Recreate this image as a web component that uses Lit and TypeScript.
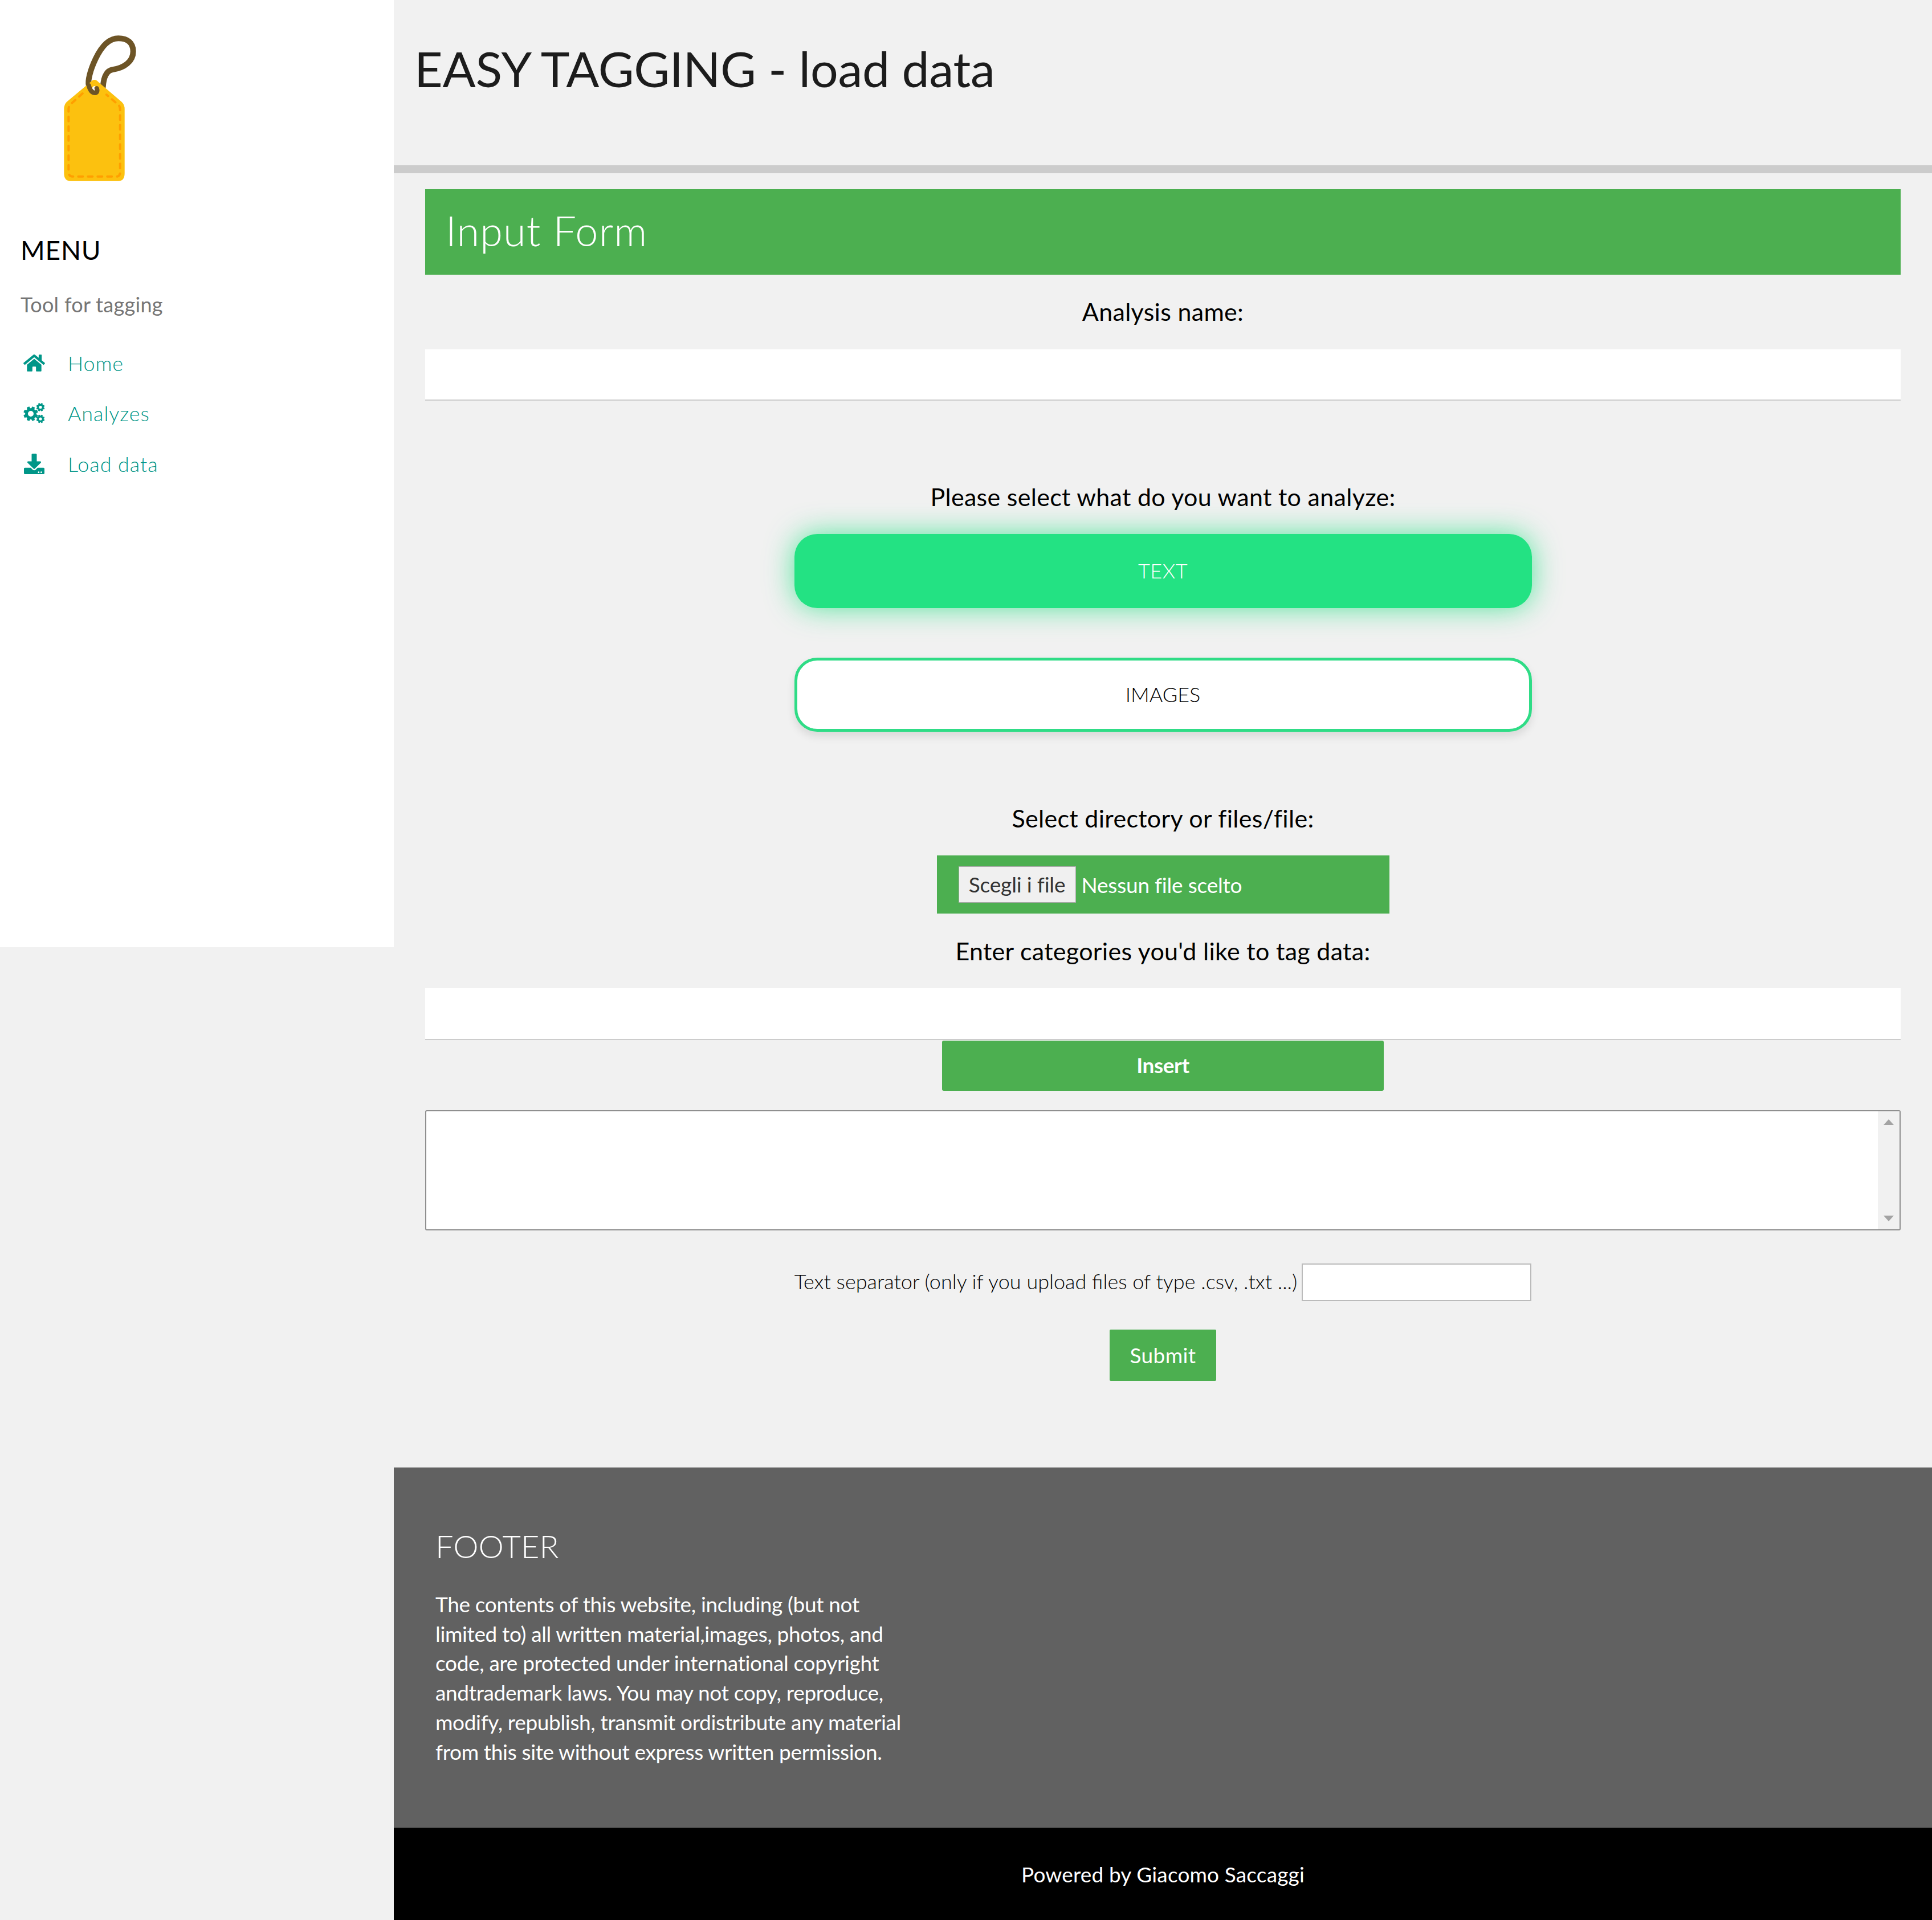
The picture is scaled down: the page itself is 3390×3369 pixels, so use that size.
import { LitElement, html, css, svg } from "lit";
import { customElement } from "lit/decorators.js";

// gear outline with a round hole, used for the "Analyzes" icon
function gear(cx: number, cy: number, r: number, hole: number, teeth = 8) {
  const pts: string[] = [];
  const step = (Math.PI * 2) / teeth;
  const inner = r * 0.76;
  for (let i = 0; i < teeth; i++) {
    const a = i * step + step / 2;
    for (const [rad, off] of [
      [inner, -0.3],
      [r, -0.19],
      [r, 0.19],
      [inner, 0.3],
    ]) {
      const t = a + off * step * 1.25;
      pts.push(`${(cx + rad * Math.cos(t)).toFixed(2)} ${(cy + rad * Math.sin(t)).toFixed(2)}`);
    }
  }
  const ring = `M${cx - hole} ${cy}a${hole} ${hole} 0 1 0 ${hole * 2} 0a${hole} ${hole} 0 1 0 ${-hole * 2} 0z`;
  return `M${pts.join("L")}z${ring}`;
}

const homeIcon = html`<svg class="icon" viewBox="0 0 576 512">
  <path
    d="M280.37 148.26L96 300.11V464a16 16 0 0 0 16 16l112.06-.29a16 16 0 0 0 15.92-16V368a16 16 0 0 1 16-16h64a16 16 0 0 1 16 16v95.64a16 16 0 0 0 16 16.05L464 480a16 16 0 0 0 16-16V300L295.67 148.26a12.19 12.19 0 0 0-15.3 0zM571.6 251.47L488 182.56V44.05a12 12 0 0 0-12-12h-56a12 12 0 0 0-12 12v72.61L318.47 43a48 48 0 0 0-61 0L4.34 251.47a12 12 0 0 0-1.6 16.9l25.5 31A12 12 0 0 0 45.15 301l235.22-193.74a12.19 12.19 0 0 1 15.3 0L530.9 301a12 12 0 0 0 16.9-1.6l25.5-31a12 12 0 0 0-1.7-16.93z"
  />
</svg>`;

const cogsIcon = html`<svg class="icon" viewBox="0 0 38 36">
  <path fill-rule="evenodd" d=${gear(13, 19, 13, 5)} />
  <path fill-rule="evenodd" d=${gear(30, 7.5, 7.5, 2.6)} />
  <path fill-rule="evenodd" d=${gear(30, 28, 7.5, 2.6)} />
</svg>`;

const downloadIcon = html`<svg class="icon" viewBox="0 0 512 512">
  <path
    d="M216 0h80c13.3 0 24 10.7 24 24v168h87.7c17.8 0 26.7 21.5 14.1 34.1L269.7 378.3c-7.5 7.5-19.8 7.5-27.3 0L90.1 226.1c-12.6-12.6-3.7-34.1 14.1-34.1H192V24c0-13.3 10.7-24 24-24zm296 376v112c0 13.3-10.7 24-24 24H24c-13.3 0-24-10.7-24-24V376c0-13.3 10.7-24 24-24h146.7l49 49c20.1 20.1 52.5 20.1 72.6 0l49-49H488c13.3 0 24 10.7 24 24zm-124 88c0-11-9-20-20-20s-20 9-20 20 9 20 20 20 20-9 20-20zm64 0c0-11-9-20-20-20s-20 9-20 20 9 20 20 20 20-9 20-20z"
  />
</svg>`;

const logo = svg`<svg class="logo" viewBox="0 0 692 376">
  <path d="M181 152C182 137 186 124 198 122C218 119 234 108 234 90C234 75 224 67 208 67C190 67 177 84 168 103C158 124 154 142 156 150" fill="none" stroke="#6d5426" stroke-width="10" stroke-linecap="round"/>
  <path fill-rule="evenodd" fill="#fcc10f" d="M159 144Q166 136 173 144L214 179Q219 184 219 191V304Q219 318 208 318H124Q112.500 318 112.500 304V191Q112.500 184 117 179ZM166 151a5 8 0 1 0 .01 0z"/>
  <path d="M145 164L124 183Q120.500 186 120.500 192V302Q120.500 310 128 310H204Q211 310 211 302V192Q211 186 207 183L187 166" fill="none" stroke="#ff9f00" stroke-width="4" stroke-dasharray="8 9" stroke-linecap="round"/>
  <path d="M156 150C158 158 162 163 167 163C170 163 172 160 170 155" fill="none" stroke="#6d5426" stroke-width="8" stroke-linecap="round"/>
</svg>`;

@customElement("app-root")
export class AppRoot extends LitElement {
  static styles = css`
    :host {
      display: block;
      min-height: 3369px;
      background: #f1f1f1;
      font-family: Lato, "Open Sans", sans-serif;
      color: #000;
    }
    .page {
      display: flex;
      align-items: flex-start;
    }

    /* sidebar */
    .sidebar {
      flex: 0 0 691px;
      height: 1662px;
      background: #fff;
      display: flex;
      flex-direction: column;
    }
    .logo {
      display: block;
      width: 691px;
      height: 376px;
    }
    .menu-title {
      margin: 36px 0 0 36px;
      font-size: 46px;
      line-height: 54px;
      letter-spacing: 0.8px;
    }
    .tagline {
      margin: 46px 0 0 36px;
      font-size: 36px;
      line-height: 44px;
      color: #757575;
      letter-spacing: 0.3px;
    }
    nav {
      margin-top: 37px;
      display: flex;
      flex-direction: column;
    }
    .nav-row {
      display: flex;
      align-items: center;
      height: 88.300px;
      color: #009688;
      font-size: 36px;
      font-weight: 300;
      letter-spacing: 0.9px;
    }
    .nav-icon {
      flex: 0 0 119px;
      display: flex;
      justify-content: center;
    }
    .icon {
      width: 38px;
      height: 36px;
      fill: #009688;
    }

    /* main column */
    main {
      flex: 1;
      min-width: 0;
    }
    header {
      height: 290px;
      border-bottom: 14px solid #ccc;
      padding-left: 36px;
    }
    h1 {
      margin: 0;
      padding-top: 70px;
      font-size: 86px;
      line-height: 100px;
      font-weight: 400;
      color: #1c1c1c;
      letter-spacing: -0.25px;
    }
    form {
      margin: 28px 55px 0 55px;
      display: flex;
      flex-direction: column;
      align-items: center;
    }
    .form-head {
      align-self: stretch;
      height: 150px;
      background: #4caf50;
      color: #fff;
      font-size: 72px;
      font-weight: 300;
      line-height: 144px;
      padding-left: 36px;
      letter-spacing: 1.2px;
    }
    .label {
      font-size: 43px;
      line-height: 52px;
      height: 52px;
      text-align: center;
      letter-spacing: 0.3px;
    }
    .field {
      align-self: stretch;
      height: 90px;
      box-sizing: border-box;
      background: #fff;
      border: none;
      border-bottom: 2px solid #ccc;
      padding: 0;
      display: block;
      outline: none;
    }
    .field.first {
      margin-top: 40px;
    }
    .field.second {
      margin-top: 39px;
      height: 91px;
    }
    .choice {
      width: 1294px;
      height: 130px;
      box-sizing: border-box;
      border-radius: 40px;
      font: inherit;
      font-size: 36px;
      font-weight: 300;
      padding: 0 0 2px;
    }
    .choice.active {
      margin-top: 39px;
      background: #23e283;
      border: none;
      color: #fff;
      letter-spacing: 0.5px;
      box-shadow: 0 0 50px rgba(35, 226, 131, 0.75);
    }
    .choice.idle {
      margin-top: 87px;
      background: #fff;
      border: 5px solid #2fdc86;
      color: #000;
      box-shadow: 0 8px 15px rgba(0, 0, 0, 0.1);
    }
    .file-box {
      margin-top: 39px;
      width: 794px;
      height: 102px;
      box-sizing: border-box;
      background: #4caf50;
      display: flex;
      align-items: center;
      padding-left: 38px;
      color: #fff;
      font-size: 37px;
      font-weight: 400;
      letter-spacing: -0.2px;
    }
    .file-btn {
      width: 206px;
      height: 64px;
      box-sizing: border-box;
      margin-right: 10px;
      background: #f0f0f0;
      color: #333;
      border: 1px solid #aaa;
      font: inherit;
      letter-spacing: -0.15px;
      padding: 0 0 2px;
    }
    .insert {
      margin-top: 1px;
      width: 775px;
      height: 88px;
      border: none;
      border-radius: 3px;
      background: #4caf50;
      color: #fff;
      font: inherit;
      font-size: 37px;
      font-weight: 700;
      letter-spacing: -0.4px;
      padding: 0 0 3px;
    }
    .area {
      margin-top: 34px;
      align-self: stretch;
      height: 211px;
      box-sizing: border-box;
      border: 2px solid #8f8f8f;
      border-radius: 3px;
      background: #fff;
      display: flex;
    }
    .area textarea {
      flex: 1;
      border: none;
      outline: none;
      resize: none;
      padding: 0;
      background: transparent;
    }
    .track {
      flex: 0 0 38px;
      background: #f1f1f1;
      display: flex;
      flex-direction: column;
      justify-content: space-between;
      align-items: center;
      padding: 14px 0;
      box-sizing: border-box;
    }
    .arrow {
      width: 18px;
      height: 10px;
      fill: #a3a3a3;
      display: block;
    }
    .separator {
      margin-top: 58px;
      display: flex;
      align-items: center;
      gap: 8px;
      font-size: 36px;
      font-weight: 300;
      color: #000;
    }
    .separator span {
      padding-bottom: 4px;
    }
    .separator input {
      width: 403px;
      height: 66px;
      box-sizing: border-box;
      border: 2px solid #bbb;
      background: #fff;
      padding: 0;
      outline: none;
    }
    .submit {
      margin-top: 50px;
      width: 187px;
      height: 90px;
      border: none;
      border-radius: 2px;
      background: #4caf50;
      color: #fff;
      font: inherit;
      font-size: 37px;
      padding: 0 0 2px;
      letter-spacing: 0.4px;
    }
    .footer-main {
      margin-top: 152px;
      height: 632px;
      background: #616161;
      color: #fff;
      padding: 106px 0 0 73px;
      box-sizing: border-box;
    }
    .footer-main h4 {
      margin: 0;
      font-size: 56px;
      line-height: 64px;
      font-weight: 300;
    }
    .footer-main p {
      margin: 44px 0 0;
      font-size: 37px;
      line-height: 51.700px;
      font-weight: 400;
      letter-spacing: -0.34px;
    }
    .footer-bar {
      height: 162px;
      background: #000;
      color: #fff;
      display: flex;
      align-items: center;
      justify-content: center;
      font-size: 37px;
      letter-spacing: 0.15px;
    }
  `;

  render() {
    return html`
      <div class="page">
        <aside class="sidebar">
          ${logo}
          <div class="menu-title">MENU</div>
          <div class="tagline">Tool for tagging</div>
          <nav>
            <div class="nav-row"><span class="nav-icon">${homeIcon}</span>Home</div>
            <div class="nav-row"><span class="nav-icon">${cogsIcon}</span>Analyzes</div>
            <div class="nav-row"><span class="nav-icon">${downloadIcon}</span>Load data</div>
          </nav>
        </aside>
        <main>
          <header><h1>EASY TAGGING - load data</h1></header>
          <form>
            <div class="form-head">Input Form</div>
            <div class="label" style="margin-top:39px">Analysis name:</div>
            <input class="field first" type="text" />
            <div class="label" style="margin-top:143px">Please select what do you want to analyze:</div>
            <button class="choice active" type="button">TEXT</button>
            <button class="choice idle" type="button">IMAGES</button>
            <div class="label" style="margin-top:126px">Select directory or files/file:</div>
            <div class="file-box">
              <button class="file-btn" type="button">Scegli i file</button>
              <span>Nessun file scelto</span>
            </div>
            <div class="label" style="margin-top:40px">Enter categories you'd like to tag data:</div>
            <input class="field second" type="text" />
            <button class="insert" type="button">Insert</button>
            <div class="area">
              <textarea></textarea>
              <div class="track">
                <svg class="arrow" viewBox="0 0 18 10"><path d="M9 0L18 10H0z" /></svg>
                <svg class="arrow" viewBox="0 0 18 10"><path d="M0 0H18L9 10z" /></svg>
              </div>
            </div>
            <div class="separator">
              <span>Text separator (only if you upload files of type .csv, .txt ...)</span>
              <input type="text" />
            </div>
            <button class="submit" type="button">Submit</button>
          </form>
          <div class="footer-main">
            <h4>FOOTER</h4>
            <p>
              The contents of this website, including (but not<br />
              limited to) all written material,images, photos, and<br />
              code, are protected under international copyright<br />
              andtrademark laws. You may not copy, reproduce,<br />
              modify, republish, transmit ordistribute any material<br />
              from this site without express written permission.
            </p>
          </div>
          <div class="footer-bar">Powered by Giacomo Saccaggi</div>
        </main>
      </div>
    `;
  }
}
